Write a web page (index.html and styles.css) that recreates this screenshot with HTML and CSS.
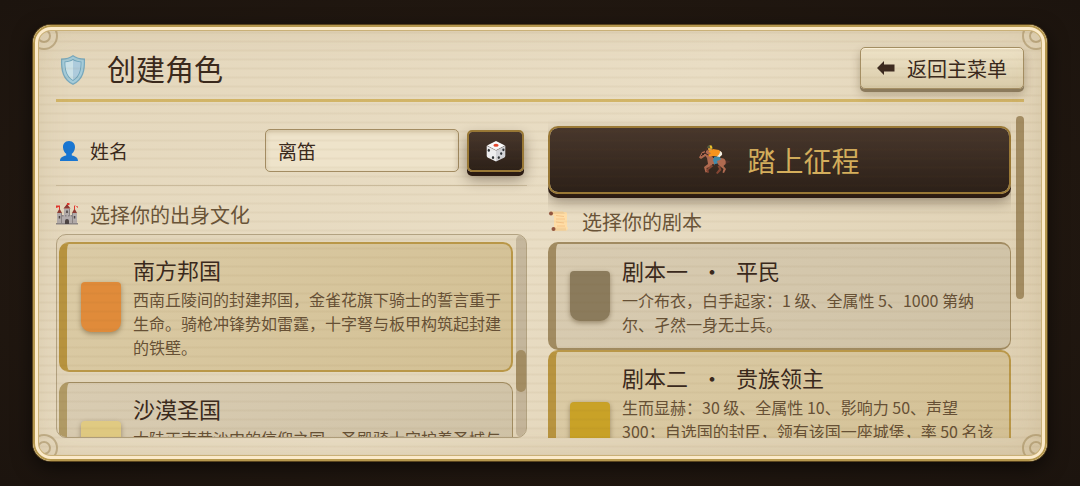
FILE: index.html
```html
<!DOCTYPE html>
<html lang="zh-CN">
<head>
    <meta charset="UTF-8">
    <meta name="viewport" content="width=device-width, initial-scale=1">
    <title>创建角色</title>
    <link rel="stylesheet" href="styles.css">
</head>
<body>
    <main class="panel">
        <svg class="corner corner-tl" viewBox="0 0 36 36"><circle cx="18" cy="18" r="6"/><circle cx="18" cy="18" r="13"/></svg>
        <svg class="corner corner-tr" viewBox="0 0 36 36"><circle cx="18" cy="18" r="6"/><circle cx="18" cy="18" r="13"/></svg>
        <svg class="corner corner-bl" viewBox="0 0 36 36"><circle cx="18" cy="18" r="6"/><circle cx="18" cy="18" r="13"/></svg>
        <svg class="corner corner-br" viewBox="0 0 36 36"><circle cx="18" cy="18" r="6"/><circle cx="18" cy="18" r="13"/></svg>

        <header class="panel-header">
            <svg class="icon-shield" viewBox="0 0 28 32">
                <path fill="#79a9bd" d="M14 1c3 2.500 7 3.500 12 3.500C26.500 17 24.500 26 14 31 3.500 26 1.500 17 2 4.500 7 4.500 11 3.500 14 1z"/>
                <path fill="#a5cbd8" d="M14 2.500c3 2 6.500 3 10.800 3.200C25 17 23 25 14 29.500 5 25 3 17 3.200 5.700 7.500 5.500 11 4.500 14 2.500z"/>
                <path fill="#6fa4ba" d="M14 5c2.500 1.500 5 2.300 8.500 2.600C22.500 16.500 21 23 14 27 7 23 5.500 16.500 5.500 7.600 9 7.300 11.500 6.500 14 5z"/>
                <path fill="#cbe2e8" d="M14 6v20C8 22.500 6.300 16 6.300 8.300 9.500 8 11.800 7.400 14 6z"/>
                <path fill="#adcbdc" d="M14 6v20c6-3.500 7.700-10 7.700-17.700-3-.3-5.500-.9-7.700-2.300z"/>
            </svg>
            <h1>创建角色</h1>
            <button type="button" class="back-btn">
                <svg viewBox="0 0 18 14"><path fill="#3d2b20" d="M0 7l7-7v3.500h10.500v7H7V14z"/></svg>
                返回主菜单
            </button>
        </header>

        <div class="panel-body">
            <section class="culture">
                <div class="name-row">
                    <svg class="icon-user" viewBox="0 0 20 20"><path fill="#1976d2" d="M10 0c4.200 0 6.200 3 6 6.500-.2 3-1.500 5.200-3.200 6.300v1.700c3.700.6 6.200 2.300 6.200 5.500H1c0-3.200 2.500-4.900 6.200-5.500v-1.700C5.500 11.700 4.200 9.500 4 6.500 3.800 3 5.800 0 10 0z"/></svg>
                    <label for="heroName">姓名</label>
                    <input type="text" id="heroName" value="离笛">
                    <button type="button" class="dice-btn" aria-label="随机姓名">
                        <svg viewBox="0 0 22 22">
                            <path fill="#fafafa" d="M11 1l9 4.500-9 4.700L2 5.500z"/>
                            <path fill="#ededee" d="M1.700 5.700l9.300 4.900V21.500L3 17.700Q1.800 17 1.700 15.700z"/>
                            <path fill="#d3d4d8" d="M20.300 5.700L11 10.600V21.500l8-3.800q1.200-.7 1.300-2z"/>
                            <ellipse cx="11" cy="5.300" rx="2.600" ry="1.500" fill="#e5482d"/>
                            <g fill="#2e3338">
                                <ellipse cx="3.800" cy="10.300" rx="1.100" ry="1.500"/><ellipse cx="8" cy="17.600" rx="1.100" ry="1.500"/>
                                <ellipse cx="18.400" cy="9.800" rx="1.100" ry="1.400"/><ellipse cx="16.200" cy="13.600" rx="1.100" ry="1.400"/><ellipse cx="13.800" cy="17.600" rx="1.100" ry="1.400"/>
                            </g>
                        </svg>
                    </button>
                </div>

                <h2>
                    <svg viewBox="0 0 22 22">
                        <path fill="#b3adad" d="M1 10h5v10H1zM16 10h5v10h-5zM6 12h10v8H6zM8 5.500h6V13H8z"/>
                        <path fill="#8b8585" d="M5 10h1v10H5zM16 10h1v10h-1zM13 6h1v7h-1zM0 20h22v1.500H0zM6 12h1.500v1.500H6zM9 12h1.500v1.500H9zM12 12h1.500v1.500H12zM15 12h1v1.500h-1z"/>
                        <path fill="#8f3a34" d="M1 10l2.500-4.500L6 10zM16 10l2.500-4.500L21 10zM7.500 5.500L11 1l3.500 4.500z"/>
                        <path fill="#e2362e" d="M4 2.500v4H3v-2.500L0 5V2.500zM19 2.500v4h-1v-4l4 1v1.500zM11 0h2.500v2H11z"/>
                        <path fill="#4c4444" d="M9 21v-3a2 2 0 0 1 4 0v3zM2.700 13h1.500v2.500H2.700zM17.800 13h1.500v2.500h-1.500zM10.200 7.500h1.600v2.500h-1.600z"/>
                    </svg>
                    选择你的出身文化
                </h2>

                <div class="culture-list">
                    <div class="cards">
                        <button type="button" class="card selected">
                            <span class="emblem emblem-south"></span>
                            <span class="card-text">
                                <strong>南方邦国</strong>
                                <span>西南丘陵间的封建邦国，金雀花旗下骑士的誓言重于生命。骑枪冲锋势如雷霆，十字弩与板甲构筑起封建的铁壁。</span>
                            </span>
                        </button>
                        <button type="button" class="card">
                            <span class="emblem emblem-desert"></span>
                            <span class="card-text">
                                <strong>沙漠圣国</strong>
                                <span>大陆正南黄沙中的信仰之国，圣殿骑士守护着圣城与商路。烈日下的轻骑来去如风，弯刀与长弓守卫着绿洲的每一口水井。</span>
                            </span>
                        </button>
                    </div>
                    <div class="track"><div class="thumb"></div></div>
                </div>
            </section>

            <section class="scenario">
                <div class="scenario-scroll">
                    <button type="button" class="start-btn">
                        <svg viewBox="0 0 32 30">
                            <path fill="#4d3029" d="M4 7l3-4 3 2-3 7zM25 16c3-1 5 0 7 1-3 .5-4 1-6 3z"/>
                            <path fill="#b06a50" d="M9 5l3 3 2 5 8 0c4 0 5.500 3 4.500 6l-2 2 2.500 3-2 4-1.500-.5 1-3.500-5-4-6-1-2 3-4 1 1 4-2 .5-1.500-5.500L9 19l-1-6-1.500-2L2 14l-2-1.500L3 7z"/>
                            <path fill="#864633" d="M12 20l-5 5 1.500 3 1.500-.5-.5-2.500 5-4zM18 20l2 4-3 4 1.500 1 4-4-1.500-4z"/>
                            <circle cx="4" cy="9" r="1" fill="#2b1b17"/>
                            <path fill="none" stroke="#34231f" d="M2 11l4-3 3 2 5 1M6 8l1-3"/>
                            <path fill="#f7941d" d="M9.500 6.500L14 4l6 1 3 3-2 4-6-1-4.500.5-1.500-1.500 3-1.500z"/>
                            <path fill="#f4f0e4" d="M21 6c2 1 2.500 2.500 2 4l-2.500 2-3-.5c2.500-1 3.500-3 3.500-5.500z"/>
                            <path fill="#418bab" d="M15.500 11.500l5.500.5 1 2.500-4 1.500 1 4-3 1-2-6z"/>
                            <path fill="#3a2b26" d="M16 19l3-.5.5 2.500-4 0z"/>
                            <circle cx="11" cy="4" r="2" fill="#e5a33d"/>
                            <path fill="#565a3b" d="M8 3c0-4 6-4 6 .5z"/>
                            <path fill="#f3c326" d="M10.500.5h2l1 3h-2z"/>
                        </svg>
                        踏上征程
                    </button>

                    <h2>
                        <svg viewBox="0 0 22 22">
                            <path fill="#ffdda6" d="M4 2h14l1 1v13.500l1 1.500-1 2.500H6.500L6 18V6L3 5z"/>
                            <path fill="none" stroke="#f6c488" d="M8 5.500l8 1M8 9l9 0M8 12l8 1M9 16h8"/>
                            <path fill="#f5d19a" d="M2.500 1.500H15L17 4H4zM5 17.500h13v3H5z"/>
                            <circle cx="3" cy="3.500" r="2" fill="#935640"/><circle cx="5.500" cy="19" r="2" fill="#935640"/>
                        </svg>
                        选择你的剧本
                    </h2>

                    <button type="button" class="card common">
                        <span class="emblem emblem-common"></span>
                        <span class="card-text">
                            <strong>剧本一<span class="dot">·</span>平民</strong>
                            <span>一介布衣，白手起家：1 级、全属性 5、1000 第纳尔、孑然一身无士兵。</span>
                        </span>
                    </button>
                    <button type="button" class="card selected">
                        <span class="emblem emblem-noble"></span>
                        <span class="card-text">
                            <strong>剧本二<span class="dot">·</span>贵族领主</strong>
                            <span>生而显赫：30 级、全属性 10、影响力 50、声望 300；自选国的封臣，领有该国一座城堡，率 50 名该国士兵，家族旗帜已在城头升起，领主的宴席与战场都在等候你的到来。</span>
                        </span>
                    </button>
                </div>
                <div class="page-track"><div class="thumb"></div></div>
            </section>
        </div>
    </main>
</body>
</html>
```
FILE: styles.css
```css
* {
    box-sizing: border-box;
}
body {
    margin: 0;
    height: 100vh;
    padding: 25px 33px;
    background: radial-gradient(ellipse at center, #281c13, #1c140e);
    font-family: "Noto Sans CJK SC", sans-serif;
    color: #3a291c;
}
button, input {
    font-family: inherit;
    color: inherit;
}
button {
    cursor: pointer;
}
svg {
    flex: none;
}

/* Parchment panel */
.panel {
    position: relative;
    display: flex;
    flex-direction: column;
    height: 100%;
    padding: 22px 23px 23px;
    overflow: hidden;
    border-radius: 18px;
    background: linear-gradient(135deg, #e4d7bc, #e9ddc4 50%, #dccdae);
    box-shadow: 0 0 0 1px #5a451f, 0 6px 20px rgba(0, 0, 0, 0.6);
}
/* Paper grain and metal rim, drawn above the content */
.panel::after {
    content: "";
    position: absolute;
    inset: 0;
    border-radius: 18px;
    background: repeating-linear-gradient(rgba(110, 80, 30, 0) 0 6px, rgba(110, 80, 30, 0.05) 7px 8px, rgba(110, 80, 30, 0) 9px);
    box-shadow: inset 0 0 0 2px #b6984e, inset 0 0 0 5px #fbeaca, inset 0 0 0 6px #c9b077, inset 0 0 36px rgba(139, 105, 45, 0.2);
    pointer-events: none;
}
.corner {
    position: absolute;
    width: 36px;
    height: 36px;
    fill: none;
    stroke: #9c8455;
    stroke-width: 2;
    opacity: 0.5;
}
.corner-tl { top: -7px; left: -7px; }
.corner-tr { top: -7px; right: -7px; }
.corner-bl { bottom: -5px; left: -7px; }
.corner-br { bottom: -5px; right: -7px; }

.panel-header {
    display: flex;
    flex: none;
    align-items: flex-start;
    height: 55px;
    border-bottom: 3px solid #cbad64;
    border-image: linear-gradient(#b98f36, #d2b568) 1;
}
.icon-shield {
    width: 28px;
    height: 32px;
    margin: 7px 20px 0 3px;
}
h1 {
    flex: 1;
    margin: 0;
    font-size: 29px;
    font-weight: 400;
    line-height: 42px;
}
.back-btn {
    display: flex;
    align-items: center;
    justify-content: center;
    gap: 12px;
    height: 42px;
    padding: 0 16px;
    border: 1px solid #a58f64;
    border-radius: 5px;
    background: linear-gradient(#efe4c9, #d9cba9);
    box-shadow: 0 3px 0 #8b7a5c, 0 5px 10px rgba(60, 40, 10, 0.3), inset 0 1px 0 #fbf2da;
    font-size: 20px;
}
.back-btn svg {
    width: 18px;
    height: 14px;
}

.panel-body {
    display: grid;
    flex: 1;
    grid-template-columns: 471fr 476fr;
    grid-template-rows: 100%;
    gap: 21px;
    min-height: 0;
}
.culture {
    display: flex;
    flex-direction: column;
    min-width: 0;
}
.name-row {
    display: flex;
    flex: none;
    align-items: center;
    height: 84px;
    padding: 14px 3px 0;
    border-bottom: 1px solid #cfc0a2;
}
.icon-user {
    width: 20px;
    height: 20px;
    margin-right: 11px;
}
.name-row label {
    flex: 1;
    font-size: 19px;
}
.name-row input {
    width: 194px;
    height: 43px;
    margin-right: 8px;
    padding: 0 12px;
    border: 1px solid #a38c62;
    border-radius: 5px;
    background: #eee3ca;
    box-shadow: inset 0 2px 5px rgba(110, 80, 30, 0.2);
    font-size: 19px;
}
.dice-btn, .start-btn {
    display: flex;
    align-items: center;
    justify-content: center;
    border: 2px solid #9a7936;
    background: linear-gradient(#48372c, #2c2018);
    background-clip: padding-box;
    box-shadow: 0 4px 0 #2b1b12, 0 7px 14px rgba(40, 25, 10, 0.45);
}
.dice-btn {
    width: 57px;
    height: 42px;
    border-radius: 5px;
}
.dice-btn svg {
    width: 22px;
    height: 22px;
}

h2 {
    display: flex;
    flex: none;
    align-items: center;
    gap: 12px;
    margin: 0;
    color: #695438;
    font-size: 20px;
    font-weight: 400;
}
h2 svg {
    width: 22px;
    height: 22px;
}
.culture h2 {
    height: 48px;
    padding-top: 8px;
}

.culture-list {
    display: flex;
    flex: 1;
    min-height: 0;
    overflow: hidden;
    border: 1px solid #b2a281;
    border-radius: 10px;
    background: rgba(120, 90, 40, 0.04);
}
.cards {
    flex: 1;
    min-width: 0;
    padding: 7px 3px 0 2px;
}
.track {
    flex: none;
    width: 10px;
    padding-top: 115px;
    border-radius: 5px;
    background: rgba(100, 80, 55, 0.24);
}
.thumb {
    border-radius: 5px;
    background: #a38d63;
}
.track .thumb {
    height: 42px;
}

/* Option cards */
.card {
    display: flex;
    align-items: center;
    gap: 12px;
    width: 100%;
    padding: 11px 8px 11px 14px;
    border: 1px solid #a18c61;
    border-left: 8px solid #b19b66;
    border-radius: 10px;
    background: linear-gradient(135deg, #d9ccb2, #cfc2a6);
    text-align: left;
}
.card.common {
    padding-top: 12px;
    padding-bottom: 12px;
    border-width: 2px 1px 2px 8px;
    border-color: #a18b61;
}
.card.selected {
    border: 2px solid #b99748;
    border-left: 8px solid #b8943f;
    background: linear-gradient(135deg, #dbcba6, #d3c094);
}
.cards .card {
    margin-bottom: 10px;
}
.card-text {
    flex: 1;
    min-width: 0;
    color: #665035;
    font-size: 16px;
    line-height: 24px;
}
.card-text strong {
    display: block;
    padding-bottom: 4px;
    color: #3a291c;
    font-size: 22px;
    font-weight: 400;
    line-height: 28px;
}
.card-text .dot {
    display: inline-block;
    width: 48px;
    text-align: center;
}
.emblem {
    flex: none;
    width: 40px;
    height: 50px;
    border-radius: 4px 4px 10px 10px;
    box-shadow: 0 2px 5px rgba(60, 40, 10, 0.4);
}
.emblem-south { background: #e08b3a; }
.emblem-desert { background: #e0ca82; }
.emblem-common { background: #8b7b5c; }
.emblem-noble { background: #c9a227; }

.scenario {
    display: flex;
    gap: 5px;
    min-width: 0;
}
.scenario-scroll {
    flex: 1;
    min-width: 0;
    padding-top: 24px;
    overflow: hidden;
}
.start-btn {
    gap: 16px;
    width: 100%;
    height: 68px;
    border-radius: 10px;
    color: #d4ae5c;
    font-size: 28px;
}
.start-btn svg {
    width: 32px;
    height: 30px;
}
.scenario h2 {
    height: 48px;
    padding-top: 6px;
}
.page-track {
    flex: none;
    width: 8px;
    padding-top: 14px;
}
.page-track .thumb {
    height: 183px;
}
```
